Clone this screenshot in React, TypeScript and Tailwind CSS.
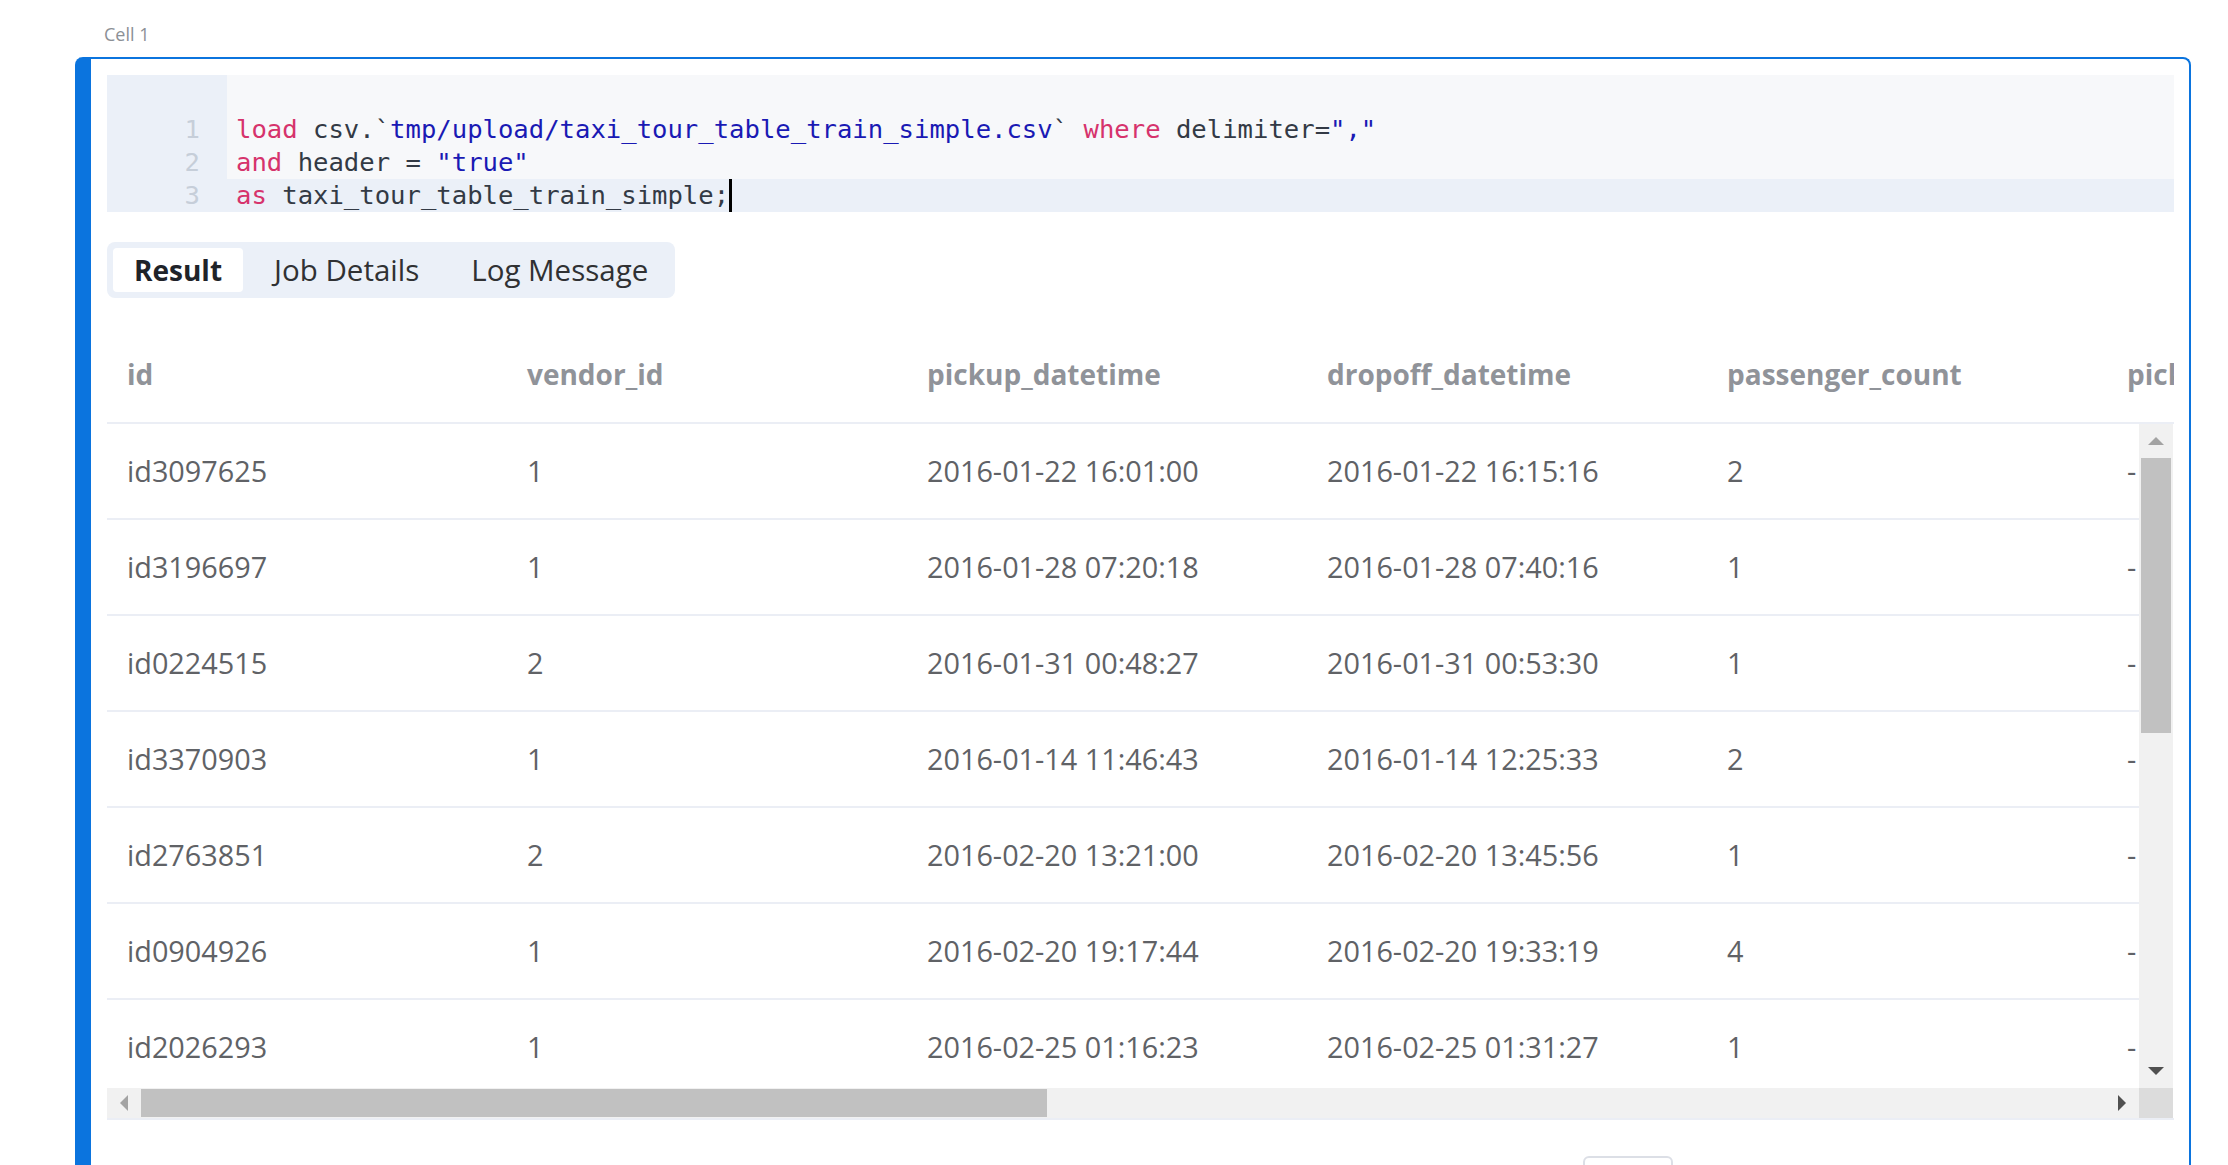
import React from 'react';

interface Row {
  id: string;
  vendor: string;
  pickup: string;
  dropoff: string;
  passengers: string;
  lon: string;
}

const columns = ['id', 'vendor_id', 'pickup_datetime', 'dropoff_datetime', 'passenger_count', 'pickup_longitude', 'pickup_latitude'];

const rows: Row[] = [
  { id: 'id3097625', vendor: '1', pickup: '2016-01-22 16:01:00', dropoff: '2016-01-22 16:15:16', passengers: '2', lon: '-73.98' },
  { id: 'id3196697', vendor: '1', pickup: '2016-01-28 07:20:18', dropoff: '2016-01-28 07:40:16', passengers: '1', lon: '-73.99' },
  { id: 'id0224515', vendor: '2', pickup: '2016-01-31 00:48:27', dropoff: '2016-01-31 00:53:30', passengers: '1', lon: '-73.96' },
  { id: 'id3370903', vendor: '1', pickup: '2016-01-14 11:46:43', dropoff: '2016-01-14 12:25:33', passengers: '2', lon: '-73.87' },
  { id: 'id2763851', vendor: '2', pickup: '2016-02-20 13:21:00', dropoff: '2016-02-20 13:45:56', passengers: '1', lon: '-73.97' },
  { id: 'id0904926', vendor: '1', pickup: '2016-02-20 19:17:44', dropoff: '2016-02-20 19:33:19', passengers: '4', lon: '-73.98' },
  { id: 'id2026293', vendor: '1', pickup: '2016-02-25 01:16:23', dropoff: '2016-02-25 01:31:27', passengers: '1', lon: '-73.95' },
];

const Kw = ({ children }: { children: React.ReactNode }) => <span className="text-[#d6336c]">{children}</span>;
const Str = ({ children }: { children: React.ReactNode }) => <span className="text-[#1a1ab4]">{children}</span>;

const Triangle = ({ dir, color }: { dir: 'up' | 'down' | 'left' | 'right'; color: string }) => {
  const pts = {
    up: '8,0 16,8 0,8',
    down: '0,0 16,0 8,8',
    left: '8,0 8,16 0,8',
    right: '0,0 8,8 0,16',
  }[dir];
  const vertical = dir === 'up' || dir === 'down';
  return (
    <svg width={vertical ? 16 : 8} height={vertical ? 8 : 16} viewBox={vertical ? '0 0 16 8' : '0 0 8 16'}>
      <polygon points={pts} fill={color} />
    </svg>
  );
};

const CodeLine = ({ n, active, children }: { n: number; active?: boolean; children: React.ReactNode }) => (
  <div className={`flex h-[33px] leading-[33px] ${active ? 'bg-[#ebf0f8]' : ''}`}>
    <div className="w-[120px] shrink-0 bg-[#ebf0f8] pr-[27px] text-right text-[#c6ced9]">{n}</div>
    <div className="pl-[9px] whitespace-pre text-[#333a45]">{children}</div>
  </div>
);

export default function App() {
  return (
    <div className="w-[2228px] h-[1165px] overflow-hidden bg-white font-['Open_Sans',sans-serif]">
      <div className="pl-[75px] pr-[37px]">
        {/* Cell label */}
        <div className="h-[57px] pl-[29px] pt-[22px] text-[18px] leading-[24px] text-[#8c9096]">Cell 1</div>

        {/* Cell card */}
        <div className="border-l-[16px] border-t-2 border-r-2 border-[#0b74de] rounded-t-[8px] pl-[16px] pt-[16px] pr-[15px]">
          {/* Editor */}
          <div className="bg-[#f7f8fa] font-['DejaVu_Sans_Mono',monospace] text-[25.6px]">
            <div className="flex h-[38px]">
              <div className="w-[120px] shrink-0 bg-[#ebf0f8]" />
            </div>
            <CodeLine n={1}>
              <Kw>load</Kw> csv.`<Str>tmp/upload/taxi_tour_table_train_simple.csv</Str>` <Kw>where</Kw> delimiter=<Str>","</Str>
            </CodeLine>
            <CodeLine n={2}>
              <Kw>and</Kw> header = <Str>"true"</Str>
            </CodeLine>
            <CodeLine n={3} active>
              <Kw>as</Kw> taxi_tour_table_train_simple;
              <span className="inline-block w-[3px] h-[33px] bg-black align-top" />
            </CodeLine>
          </div>

          {/* Tabs */}
          <div className="mt-[30px] inline-flex gap-[10px] rounded-[8px] bg-[#ebf0f8] p-[6px]">
            <div className="flex h-[44px] items-center rounded-[4px] bg-white px-[21px] text-[28px] font-bold text-[#1f2329]">Result</div>
            <div className="flex h-[44px] items-center px-[21px] text-[29.5px] text-[#303133]">Job Details</div>
            <div className="flex h-[44px] items-center px-[21px] text-[29.5px] text-[#303133]">Log Message</div>
          </div>

          {/* Table */}
          <div className="mt-[28px]">
            <div className="flex h-[98px] overflow-hidden border-b-2 border-[#ebeef5] text-[28px]">
              {columns.map((c) => (
                <div key={c} className="w-[400px] shrink-0 pl-[20px] font-bold leading-[96px] text-[#909399] whitespace-nowrap">
                  {c}
                </div>
              ))}
            </div>

            <div className="flex h-[664px] text-[28.8px]">
              <div className="w-[2032px] overflow-hidden">
                {rows.map((r) => (
                  <div key={r.id} className="flex h-[96px] border-b-2 border-[#ebeef5] text-[#606266]">
                    {[r.id, r.vendor, r.pickup, r.dropoff, r.passengers].map((v, i) => (
                      <div key={i} className="w-[400px] shrink-0 pl-[20px] leading-[94px] whitespace-nowrap">{v}</div>
                    ))}
                    <div className="w-[400px] shrink-0 pl-[20px] leading-[94px] whitespace-nowrap tracking-[4px]">{r.lon}</div>
                    <div className="w-[400px] shrink-0 pl-[20px] leading-[94px] whitespace-nowrap">40.75</div>
                  </div>
                ))}
              </div>
              {/* vertical scrollbar */}
              <div className="flex w-[34px] flex-col bg-[#f1f1f1]">
                <div className="flex h-[34px] items-center justify-center">
                  <Triangle dir="up" color="#a3a3a3" />
                </div>
                <div className="mx-[2px] h-[275px] bg-[#c1c1c1]" />
                <div className="flex-1" />
                <div className="flex h-[34px] items-center justify-center">
                  <Triangle dir="down" color="#505050" />
                </div>
              </div>
            </div>

            {/* horizontal scrollbar */}
            <div className="flex h-[32px] border-b-2 border-[#ebeef5]">
              <div className="flex w-[2032px] items-center bg-[#f1f1f1]">
                <div className="flex w-[34px] justify-center">
                  <Triangle dir="left" color="#a3a3a3" />
                </div>
                <div className="h-[28px] w-[906px] bg-[#c1c1c1]" />
                <div className="flex-1" />
                <div className="flex w-[34px] justify-center">
                  <Triangle dir="right" color="#505050" />
                </div>
              </div>
              <div className="w-[34px] bg-[#dcdcdc]" />
            </div>
          </div>

          {/* Pagination */}
          <div className="mt-[36px] ml-[1476px] h-[44px] w-[90px] rounded-[6px] border-2 border-[#dcdfe6]" />
        </div>
      </div>
    </div>
  );
}
